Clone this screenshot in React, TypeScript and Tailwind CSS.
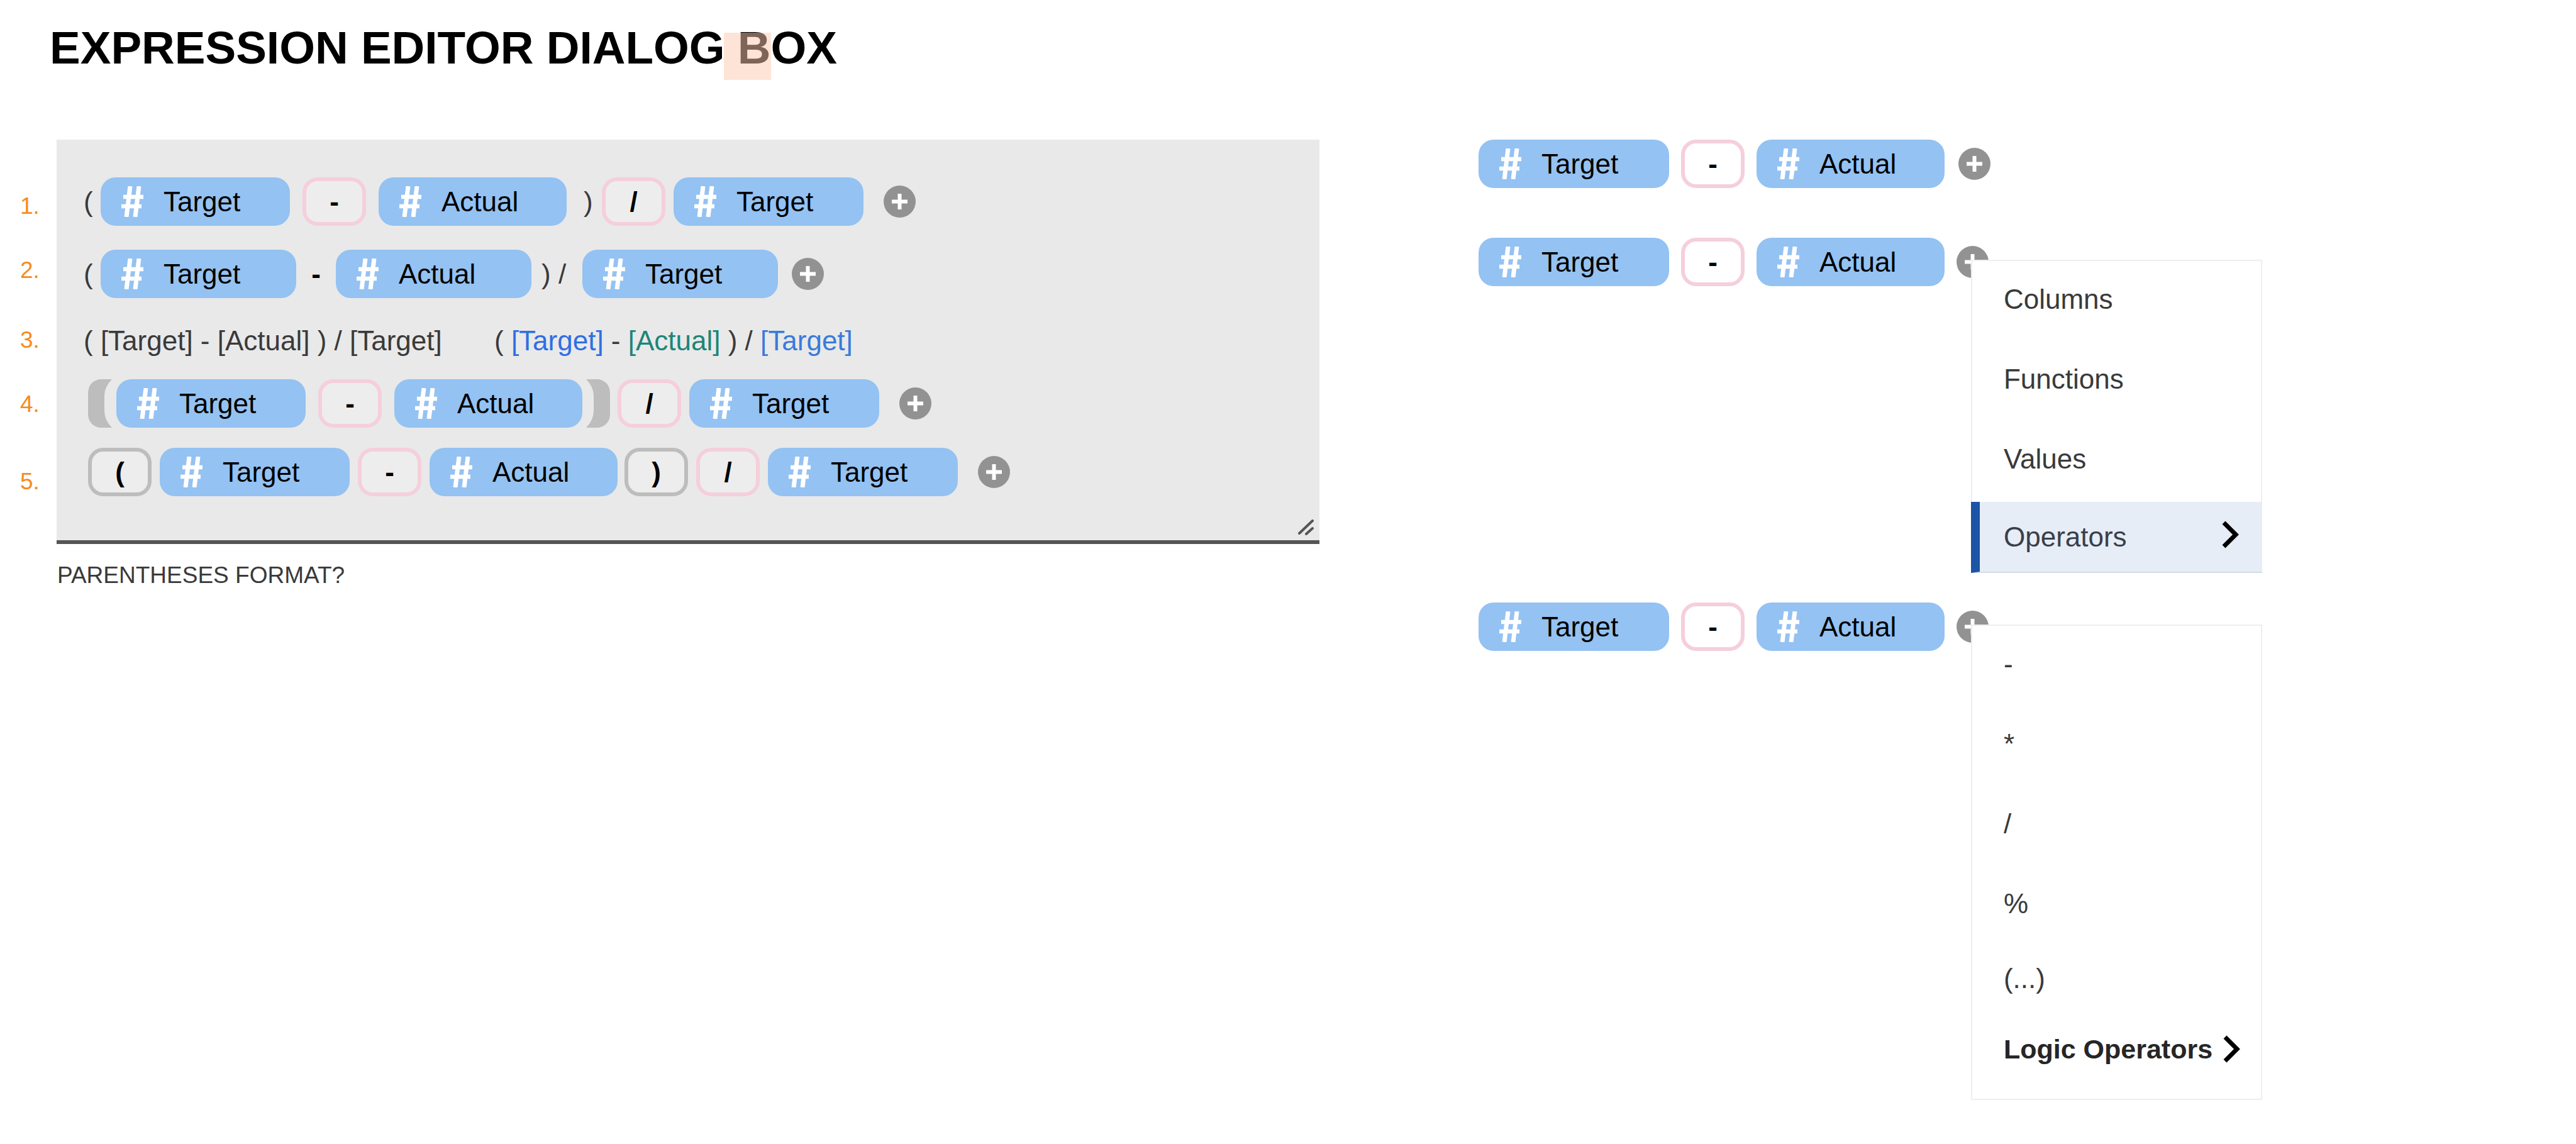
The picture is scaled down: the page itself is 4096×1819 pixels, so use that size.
import React from "react";

function HashIcon() {
  return (
    <svg width="35" height="49" viewBox="0 0 35 49" className="shrink-0" fill="none" stroke="#ffffff" aria-hidden="true">
      <path d="M14 0 L8 49 M28 0 L22 49" strokeWidth="7" />
      <path d="M3 17 H35 M0 32 H32" strokeWidth="6.5" />
    </svg>
  );
}

function Field({ name, width }: { name: string; width: string }) {
  return (
    <button
      type="button"
      className={`flex h-[77px] shrink-0 items-center rounded-[24px] bg-[#94c2f2] pl-[33px] text-left text-black ${width}`}
    >
      <HashIcon />
      <span className="ml-8">{name}</span>
    </button>
  );
}

function Operator({ symbol, tone = "border-[#f5cfdb]" }: { symbol: string; tone?: string }) {
  return (
    <button
      type="button"
      className={`flex h-[77px] w-[101px] shrink-0 items-center justify-center rounded-[24px] border-[6px] bg-white/20 font-bold text-black ${tone}`}
    >
      {symbol}
    </button>
  );
}

function AddButton() {
  return (
    <button type="button" aria-label="Add element" className="block size-[51px] shrink-0">
      <svg width="51" height="51" viewBox="0 0 51 51" aria-hidden="true">
        <circle cx="25.5" cy="25.5" r="25.5" fill="#929292" />
        <path d="M25.5 13 V38 M13 25.5 H38" stroke="#ffffff" strokeWidth="6" />
      </svg>
    </button>
  );
}

function Bracket({ side }: { side: "open" | "close" }) {
  const open = "M18 0 H38 Q26 12 26 27 V50 Q26 65 38 77 H18 Q0 73 0 54 V23 Q0 4 18 0 Z";
  const close = "M20 0 H0 Q12 12 12 27 V50 Q12 65 0 77 H20 Q38 73 38 54 V23 Q38 4 20 0 Z";
  return (
    <svg width="38" height="77" viewBox="0 0 38 77" className="shrink-0" fill="#bdbdbd" aria-hidden="true">
      <path d={side === "open" ? open : close} />
    </svg>
  );
}

function Chevron() {
  return (
    <svg width="28" height="44" viewBox="0 0 28 44" fill="none" stroke="#000000" strokeWidth="7" aria-hidden="true">
      <path d="M3 3 L22 22 L3 41" />
    </svg>
  );
}

function MenuItem({ label }: { label: string }) {
  return (
    <button type="button" role="menuitem" className="flex h-[127px] items-center pb-[6px] pl-[50px] text-left">
      {label}
    </button>
  );
}

function ElementMenu() {
  return (
    <div
      role="menu"
      className="absolute left-[23px] top-[22px] flex w-[463px] flex-col border-2 border-[#eeeeee] bg-white text-[#3a3a3a]"
    >
      <MenuItem label="Columns" />
      <MenuItem label="Functions" />
      <MenuItem label="Values" />
      <button
        type="button"
        role="menuitem"
        className="-mx-[2px] -mb-[2px] mt-[2px] flex h-[113px] items-center justify-between border-b-2 border-l-[14px] border-b-[#d5dbe4] border-l-[#1c54a6] bg-[#e6edf6] pl-[38px] pr-[36px] text-left text-[#3a3f4a]"
      >
        Operators
        <span className="mb-2">
          <Chevron />
        </span>
      </button>
    </div>
  );
}

function OperatorMenu() {
  return (
    <div
      role="menu"
      className="absolute left-[23px] top-[22px] flex w-[463px] flex-col border-2 border-[#eeeeee] bg-white pb-[20px] text-[#3a3a3a]"
    >
      <MenuItem label="-" />
      <MenuItem label="*" />
      <MenuItem label="/" />
      <MenuItem label="%" />
      <button type="button" role="menuitem" className="flex h-[112px] items-center pb-[6px] pl-[50px] text-left">
        (...)
      </button>
      <button
        type="button"
        role="menuitem"
        className="flex h-[112px] items-center justify-between pb-[6px] pl-[50px] pr-[32px] text-left text-[43px] font-bold text-[#262626]"
      >
        Logic Operators
        <Chevron />
      </button>
    </div>
  );
}

function Example({ gap, menu }: { gap: string; menu?: React.ReactNode }) {
  return (
    <div className="flex h-[77px] items-center">
      <Field name="Target" width="w-[303px]" />
      <div className="mx-[19px]">
        <Operator symbol="-" />
      </div>
      <Field name="Actual" width="w-[299px]" />
      <div className={`relative ${gap}`}>
        <AddButton />
        {menu}
      </div>
    </div>
  );
}

export default function App() {
  return (
    <main className="min-h-screen overflow-hidden bg-white font-['Liberation_Sans',Arial,sans-serif] text-[44px] leading-[60px] text-[#3a3a3a]">
      <header className="relative pl-[79px] pt-8">
        <h1 className="text-[73px] font-bold leading-[88px] text-black">EXPRESSION EDITOR DIALOG BOX</h1>
        <div className="absolute left-[1151px] top-[52px] size-[75px] bg-[#fccaad]/50" />
      </header>

      <div className="mt-[102px] flex items-start">
        <section className="flex w-[51.22%] shrink-0">
          <ol className="w-[90px] shrink-0 pl-8 pt-[84px] text-[37px] leading-[44px] text-[#f68b1f]">
            <li>1.</li>
            <li className="mt-[58px]">2.</li>
            <li className="mt-[67px]">3.</li>
            <li className="mt-[58px]">4.</li>
            <li className="mt-[79px]">5.</li>
          </ol>

          <div className="min-w-0 flex-1">
            <div className="relative border-b-[6px] border-[#555555] bg-[#e9e9e9] pb-[70px] pt-[60px]">
              <div className="flex items-center pl-[43px]">
                <span className="w-[27px]">(</span>
                <Field name="Target" width="w-[301px]" />
                <div className="mx-5">
                  <Operator symbol="-" />
                </div>
                <Field name="Actual" width="w-[299px]" />
                <span className="w-[56px] pl-[27px]">)</span>
                <Operator symbol="/" />
                <div className="ml-[13px] mr-8">
                  <Field name="Target" width="w-[302px]" />
                </div>
                <AddButton />
              </div>

              <div className="mt-[38px] flex items-center pl-[43px]">
                <span className="w-[27px]">(</span>
                <Field name="Target" width="w-[311px]" />
                <span className="w-[63px] text-center font-bold text-black">-</span>
                <Field name="Actual" width="w-[311px]" />
                <span className="w-[81px] pl-4">) /</span>
                <div className="mr-[22px]">
                  <Field name="Target" width="w-[311px]" />
                </div>
                <AddButton />
              </div>

              <div className="mt-[38px] flex pl-[43px]">
                <span className="w-[653px]">( [Target] - [Actual] ) / [Target]</span>
                <span>
                  ( <span className="text-[#2f6fe4]">[Target]</span> - <span className="text-[#1d8577]">[Actual]</span> ) /{" "}
                  <span className="text-[#3a7bdb]">[Target]</span>
                </span>
              </div>

              <div className="mt-[31px] flex items-center pl-[50px]">
                <Bracket side="open" />
                <div className="ml-[7px]">
                  <Field name="Target" width="w-[301px]" />
                </div>
                <div className="mx-5">
                  <Operator symbol="-" />
                </div>
                <Field name="Actual" width="w-[299px]" />
                <div className="ml-[6px] mr-3">
                  <Bracket side="close" />
                </div>
                <Operator symbol="/" />
                <div className="ml-[13px] mr-8">
                  <Field name="Target" width="w-[302px]" />
                </div>
                <AddButton />
              </div>

              <div className="mt-8 flex items-center pl-[50px]">
                <Operator symbol="(" tone="border-[#bdbdbd]" />
                <div className="mx-[13px]">
                  <Field name="Target" width="w-[302px]" />
                </div>
                <Operator symbol="-" />
                <div className="ml-[13px] mr-[11px]">
                  <Field name="Actual" width="w-[299px]" />
                </div>
                <Operator symbol=")" tone="border-[#bdbdbd]" />
                <div className="mx-[13px]">
                  <Operator symbol="/" />
                </div>
                <Field name="Target" width="w-[302px]" />
                <div className="ml-8">
                  <AddButton />
                </div>
              </div>

              <svg
                width="25"
                height="25"
                viewBox="0 0 25 25"
                className="absolute bottom-[8px] right-[9px]"
                stroke="#555555"
                strokeWidth="4"
                strokeLinecap="round"
                aria-hidden="true"
              >
                <path d="M2 22 L23 2 M13 23 L23 14" />
              </svg>
            </div>
            <p className="mt-[28px] pl-[1px] text-[37px] leading-[44px]">PARENTHESES FORMAT?</p>
          </div>
        </section>

        <section className="ml-[253px] flex flex-col">
          <Example gap="ml-[22px]" />
          <div className="mt-[79px]">
            <Example gap="ml-[19px]" menu={<ElementMenu />} />
          </div>
          <div className="mt-[503px]">
            <Example gap="ml-[19px]" menu={<OperatorMenu />} />
          </div>
        </section>
      </div>
    </main>
  );
}
